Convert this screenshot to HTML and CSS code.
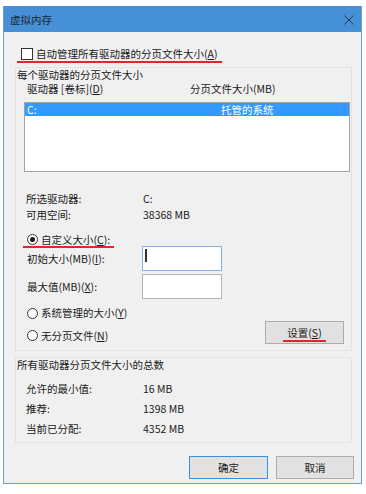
FILE: index.html
```html
<!DOCTYPE html>
<html lang="zh-CN">
<head>
  <meta charset="UTF-8">
  <title>虚拟内存</title>
  <link rel="stylesheet" href="styles.css">
</head>
<body>
  <div class="window">
    <div class="titlebar">
      <span class="title">虚拟内存</span>
      <svg class="close" width="10" height="10" viewBox="0 0 10 10">
        <path d="M0.5 0.5 L9.5 9.5 M9.5 0.5 L0.5 9.5" stroke="#2b3a4c" stroke-width="1" fill="none"/>
      </svg>
    </div>

    <div class="content">
      <div class="auto-row">
        <span class="mark"><span class="checkbox"></span>自动管理所有驱动器的分页文件大小(<u>A</u>)</span>
      </div>

      <div class="group group-drives">
        <div class="group-label">每个驱动器的分页文件大小</div>
        <div class="list-head">
          <span class="col-drive">驱动器 [卷标](<u>D</u>)</span>
          <span>分页文件大小(MB)</span>
        </div>
        <div class="listbox">
          <div class="list-item selected">
            <span class="col-drive">C:</span>
            <span>托管的系统</span>
          </div>
        </div>

        <div class="info">
          <div class="info-row"><span class="info-label">所选驱动器:</span><span>C:</span></div>
          <div class="info-row"><span class="info-label">可用空间:</span><span>38368 MB</span></div>
        </div>

        <div class="radio-row custom">
          <span class="mark"><span class="radio checked"></span>自定义大小(<u>C</u>):</span>
        </div>
        <div class="field-row first">
          <span class="field-label">初始大小(MB)(<u>I</u>):</span>
          <div class="input focused"><span class="caret"></span></div>
        </div>
        <div class="field-row">
          <span class="field-label">最大值(MB)(<u>X</u>):</span>
          <div class="input"></div>
        </div>

        <div class="bottom-row">
          <div class="radios">
            <div class="radio-row"><span class="plain"><span class="radio"></span>系统管理的大小(<u>Y</u>)</span></div>
            <div class="radio-row"><span class="plain"><span class="radio"></span>无分页文件(<u>N</u>)</span></div>
          </div>
          <div class="btn btn-set"><span class="mark">设置(<u>S</u>)</span></div>
        </div>
      </div>

      <div class="group group-total">
        <div class="group-label">所有驱动器分页文件大小的总数</div>
        <div class="totals">
          <div class="total-row"><span class="info-label">允许的最小值:</span><span>16 MB</span></div>
          <div class="total-row"><span class="info-label">推荐:</span><span>1398 MB</span></div>
          <div class="total-row"><span class="info-label">当前已分配:</span><span>4352 MB</span></div>
        </div>
      </div>

      <div class="actions">
        <div class="btn btn-ok">确定</div>
        <div class="btn btn-cancel">取消</div>
      </div>
    </div>
  </div>
</body>
</html>
```

FILE: styles.css
```css
body {
  margin: 0;
  background-color: #ffffff;
  font-family: "Noto Sans CJK SC", "Liberation Sans", sans-serif;
  font-size: 10.5px;
  color: #1a1a1a;
}

u {
  text-decoration: underline;
  text-underline-offset: 1px;
}

.window {
  margin: 6px 0 0 3px;
  width: 359px;
  box-sizing: border-box;
  border: 1px solid #6d9fd4;
  border-top-color: #4590d6;
  background-color: #f0f0f0;
}

.titlebar {
  height: 25px;
  background-color: #4590d6;
  display: flex;
  align-items: center;
  justify-content: space-between;
  padding: 0 7px 0 6px;
}

.title {
  color: #1b2633;
  line-height: 14px;
}

.content {
  padding: 0 7px 4px 11px;
}

/* red annotation marks */
.mark {
  display: inline-flex;
  align-items: center;
  padding: 0 4px;
  border-bottom: 2px solid #e3262b;
}

.plain {
  display: inline-flex;
  align-items: center;
  padding: 0 4px;
}

.auto-row {
  padding-top: 15px;
  line-height: 14px;
  margin-left: 2px;
}

.checkbox {
  width: 12px;
  height: 12px;
  box-sizing: border-box;
  border: 1px solid #333333;
  background-color: #ffffff;
  margin-right: 3px;
}

.radio {
  width: 11px;
  height: 11px;
  box-sizing: border-box;
  border: 1px solid #333333;
  border-radius: 50%;
  background-color: #ffffff;
  margin-right: 3px;
  display: flex;
  align-items: center;
  justify-content: center;
}

.radio.checked::after {
  content: "";
  width: 5px;
  height: 5px;
  border-radius: 50%;
  background-color: #1a1a1a;
}

.group {
  width: 337px;
  box-sizing: border-box;
  border: 1px solid #e2e2e2;
}

.group-drives {
  margin-top: 4px;
  padding-bottom: 6px;
}

.group-label {
  line-height: 14px;
  padding-left: 1px;
}

.list-head {
  display: flex;
  line-height: 14px;
  padding-left: 11px;
}

.list-head .col-drive {
  width: 163px;
}

.listbox {
  margin: 6px 0 0 8px;
  width: 326px;
  height: 70px;
  box-sizing: border-box;
  border: 1px solid #a3a3a3;
  background-color: #ffffff;
}

.list-item {
  display: flex;
  line-height: 13px;
  padding-left: 2px;
}

.list-item .col-drive {
  width: 194px;
}

.list-item.selected {
  background-color: #3399ff;
  color: #ffffff;
}

.info {
  margin-top: 19px;
}

.info-row {
  display: flex;
  line-height: 16px;
  padding-left: 10px;
}

.info-label {
  width: 117px;
}

.radio-row {
  line-height: 13px;
  margin-left: 7px;
}

.radio-row.custom {
  margin-top: 8px;
}

.field-row {
  display: flex;
  align-items: center;
  height: 25px;
  padding-left: 11px;
  margin-top: 3px;
}

.field-row.first {
  margin-top: -2px;
}

.field-label {
  width: 115px;
}

.input {
  width: 80px;
  height: 25px;
  box-sizing: border-box;
  border: 1px solid #b4b4b4;
  background-color: #ffffff;
  padding: 2px 0 0 2px;
}

.input.focused {
  border-color: #7eb4ea;
}

.caret {
  display: block;
  width: 2px;
  height: 13px;
  background-color: #333333;
}

.bottom-row {
  display: flex;
  justify-content: space-between;
  margin-top: 7px;
  padding-right: 7px;
}

.radios {
  display: flex;
  flex-direction: column;
  gap: 7px;
}

.radios .radio-row {
  line-height: 14px;
}

.btn {
  height: 23px;
  box-sizing: border-box;
  border: 1px solid #adadad;
  background-color: #e1e1e1;
  display: flex;
  justify-content: center;
  align-items: center;
}

.btn-set {
  width: 79px;
  margin-top: 15px;
  align-items: flex-end;
  line-height: 14px;
  padding-bottom: 1px;
}

.group-total {
  margin-top: 6px;
  padding-bottom: 3px;
}

.totals {
  margin-top: 7px;
}

.total-row {
  display: flex;
  line-height: 20px;
  padding-left: 10px;
}

.actions {
  display: flex;
  justify-content: flex-end;
  gap: 8px;
  margin-top: 13px;
}

.btn-ok {
  width: 79px;
  border-color: #3c8fe0;
}

.btn-cancel {
  width: 78px;
}
```
